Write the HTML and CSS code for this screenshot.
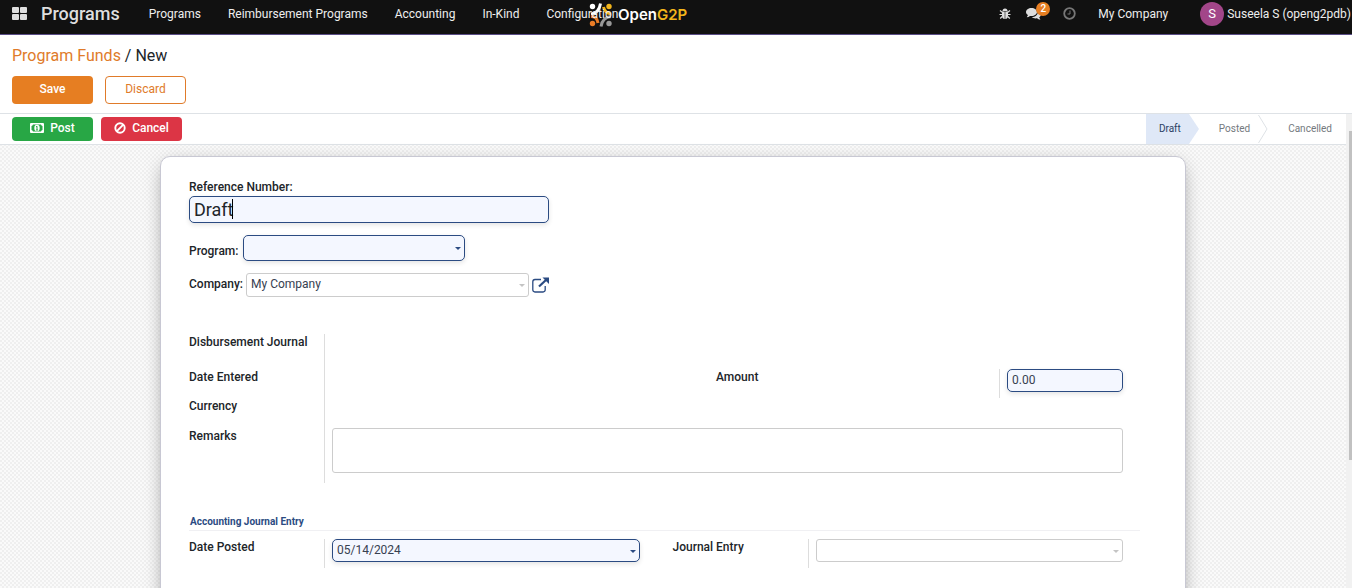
FILE: index.html
```html
<!DOCTYPE html>
<html lang="en">
<head>
<meta charset="utf-8">
<title>Program Funds - New</title>
<link rel="stylesheet" href="styles.css">
</head>
<body>
<header class="navbar">
  <button class="apps" aria-label="Home menu">
    <svg width="15" height="13" viewBox="0 0 15 13" fill="#dedede"><rect width="7" height="6" rx="1"/><rect x="8" width="7" height="6" rx="1"/><rect y="7" width="7" height="6" rx="1"/><rect x="8" y="7" width="7" height="6" rx="1"/></svg>
  </button>
  <a class="brand" href="#">Programs</a>
  <nav class="menu">
    <a href="#">Programs</a>
    <a href="#">Reimbursement Programs</a>
    <a href="#">Accounting</a>
    <a href="#">In-Kind</a>
    <a href="#">Configuration</a>
  </nav>
  <div class="logo">
    <svg width="24" height="24" viewBox="0 0 24 24">
      <g fill="none" stroke-width="3"><path d="M2 11C7 10.500 10.500 7 11.500 .5" stroke="#fff"/><path d="M14.500 4C15.500 8 18 10.500 22 11" stroke="#f3b51b"/><path d="M2 13.500C6 13.500 8.500 16 9 20" stroke="#e97c26"/><path d="M22 13.500C17 14 13 17 12 23.500" stroke="#999"/></g>
      <circle cx="3.500" cy="3.500" r="2.700" fill="#fff"/><circle cx="20" cy="3.500" r="2.700" fill="#f3b51b"/><circle cx="3.500" cy="20.500" r="2.700" fill="#e97c26"/><circle cx="20" cy="20.500" r="2.700" fill="#999"/>
    </svg>
    <span class="logo-text">Open<b>G2P</b></span>
  </div>
  <div class="systray">
    <button class="tray-btn bug" aria-label="Debug">
      <svg width="12" height="12" viewBox="0 0 12 12"><path d="M3.500 3a2.500 2.500 0 0 1 5 0z" fill="#dedede"/><path d="M3 3.500h2.700V11C3.800 11 3 9.500 3 7.500zM6.300 3.500H9v4c0 2-.8 3.500-2.700 3.500z" fill="#dedede"/><path d="M1 2.500l2.500 2M11 2.500l-2.500 2M.5 6.500H3M9 6.500h2.500M1.200 10.500l2-2M10.800 10.500l-2-2" stroke="#dedede" stroke-width="1.200"/></svg>
    </button>
    <button class="tray-btn chat" aria-label="Messages">
      <svg width="15" height="12" viewBox="0 0 15 12" fill="#dedede"><path d="M5.500 0C8.600 0 11 1.800 11 4S8.600 8 5.500 8L4 7.900C3 8.800 1.900 9.300.8 9.300L2 7C.8 6.300 0 5.200 0 4c0-2.200 2.400-4 5.500-4z"/><path d="M12 3.500c1.900.6 3 1.800 3 3.100 0 1.100-.7 2-1.800 2.700l1.200 2.500c-1.400-.1-2.500-.6-3.400-1.500-2.300.3-4.200-.2-5.300-1.200C9.300 9 12 7 12 3.500z"/></svg>
      <span class="badge">2</span>
    </button>
    <button class="tray-btn clock" aria-label="Activities">
      <svg width="13" height="13" viewBox="0 0 13 13" fill="none" stroke="#777"><circle cx="6.500" cy="6.500" r="5.300" stroke-width="1.800"/><path d="M7 3.500V7H4.500"/></svg>
    </button>
    <a class="company" href="#">My Company</a>
    <a class="user" href="#"><span class="avatar">S</span>Suseela S (openg2pdb)</a>
  </div>
</header>

<section class="control-panel">
  <div class="breadcrumb"><a href="#">Program Funds</a> / New</div>
  <div class="actions">
    <button class="btn save">Save</button>
    <button class="btn discard">Discard</button>
  </div>
</section>

<main class="content">
  <div class="form-view">
    <div class="statusbar">
      <button class="btn post"><svg width="14" height="10" viewBox="0 0 14 10"><rect width="14" height="10" rx="1" fill="#fff"/><path d="M3 1.500h8a2 2 0 0 0 1.500 1.500v4A2 2 0 0 0 11 8.500H3A2 2 0 0 0 1.500 7V3A2 2 0 0 0 3 1.500z" fill="#28a745"/><ellipse cx="7" cy="5" rx="2.700" ry="3.200" fill="#fff"/><path d="M6 4l1-.8V7M6 7h2" fill="none" stroke="#28a745"/></svg>Post</button>
      <button class="btn cancel"><svg width="12" height="12" viewBox="0 0 12 12" fill="none" stroke="#fff" stroke-width="1.900"><circle cx="6" cy="6" r="4.700"/><path d="M2.700 9.300l6.600-6.600"/></svg>Cancel</button>
      <div class="stages">
        <button class="stage current">Draft</button>
        <svg class="arrow" width="11" height="30" viewBox="0 0 11 30"><path d="M0 0L10 15 0 30z" fill="#dfe8f7"/></svg>
        <button class="stage">Posted</button>
        <svg class="arrow" width="11" height="30" viewBox="0 0 11 30"><path d="M.5 1L9 15 .5 29" fill="none" stroke="#dee2e6"/></svg>
        <button class="stage last">Cancelled</button>
      </div>
    </div>
    <form class="sheet">
      <label class="label" for="ref">Reference Number:</label>
      <div class="ref-box"><input class="field required ref" id="ref" value="Draft"><span class="caret"></span></div>
      <div class="line program-line">
        <label class="label" for="program">Program:</label>
        <div class="picker"><select class="field required" id="program"><option></option></select></div>
      </div>
      <div class="line company-line">
        <label class="label" for="company">Company:</label>
        <div class="picker muted"><select class="field" id="company"><option>My Company</option></select></div>
        <button type="button" class="external" aria-label="Open company">
          <svg width="17" height="16" viewBox="0 0 17 16" fill="none" stroke="#2b4b82"><path d="M9 2.500H3A2.300 2.300 0 0 0 .8 4.800v8A2.300 2.300 0 0 0 3 15h8a2.300 2.300 0 0 0 2.200-2.200V9" stroke-width="1.300"/><path d="M7 9.500L14 3" stroke-width="2.200"/><path d="M10.500.5H17V7z" fill="#2b4b82" stroke="none"/></svg>
        </button>
      </div>

      <div class="group main-group">
        <div class="labels">
          <span class="label">Disbursement Journal</span>
          <span class="label">Date Entered</span>
          <span class="label">Currency</span>
          <label class="label" for="remarks">Remarks</label>
        </div>
        <div class="values">
          <div class="amount-row">
            <label class="label" for="amount">Amount</label>
            <div class="amount-cell"><input class="field required" id="amount" value="0.00"></div>
          </div>
          <textarea class="field remarks" id="remarks"></textarea>
        </div>
      </div>

      <h2 class="separator">Accounting Journal Entry</h2>
      <div class="group entry-group">
        <label class="label" for="posted">Date Posted</label>
        <div class="cell"><div class="picker"><select class="field required" id="posted"><option>05/14/2024</option></select></div></div>
        <label class="label second" for="journal">Journal Entry</label>
        <div class="cell"><div class="picker muted"><select class="field" id="journal"><option></option></select></div></div>
      </div>
    </form>
  </div>
  <div class="scrollbar"><div class="thumb"></div></div>
</main>
</body>
</html>
```
FILE: styles.css
```css
* { box-sizing: border-box; }

body {
  margin: 0;
  height: 100vh;
  display: flex;
  flex-direction: column;
  overflow: hidden;
  background: #fff;
  color: #212529;
  font: 12px/18px Roboto, "Liberation Sans", sans-serif;
}

a { color: inherit; text-decoration: none; }

button, input, select, textarea { font: inherit; color: inherit; }

button {
  padding: 0;
  border: 0;
  background: none;
}

svg { display: block; flex: none; }

/* Top bar */
.navbar {
  position: relative;
  display: flex;
  align-items: center;
  flex: none;
  height: 35px;
  padding: 0 1px 7px 12px;
  background: #111;
  border-bottom: 1px solid #5a4d86;
  color: #eee;
  white-space: nowrap;
}

.brand {
  margin-left: 14px;
  font-size: 18px;
  font-weight: 500;
  color: #dedede;
}

.menu {
  display: flex;
  gap: 27px;
  margin-left: 29px;
  z-index: 1;
}

.logo {
  position: absolute;
  left: 589px;
  top: 3px;
  display: flex;
  align-items: center;
  gap: 5px;
}

.logo-text {
  font: 600 15px/20px Inter, "Open Sans", sans-serif;
  color: #fff;
}

.logo-text b {
  font-weight: 600;
  color: #f3b51b;
}

.systray {
  display: flex;
  align-items: center;
  margin-left: auto;
}

.chat {
  position: relative;
  margin-left: 15px;
}

.clock { margin-left: 22px; }

.badge {
  position: absolute;
  left: 10px;
  top: -6px;
  width: 14px;
  border-radius: 7px;
  background: #e67e22;
  color: #fff;
  font-size: 10px;
  font-weight: 500;
  line-height: 14px;
}

.company { margin-left: 22px; }

.user {
  display: flex;
  align-items: center;
  gap: 3px;
  margin-left: 32px;
}

.avatar {
  width: 24px;
  border-radius: 50%;
  background: #a24689;
  color: #fff;
  font-size: 13px;
  line-height: 24px;
  text-align: center;
}

/* Breadcrumb and record buttons */
.control-panel {
  flex: none;
  padding: 9px 12px;
  border-bottom: 1px solid #dee2e6;
}

.breadcrumb {
  font-size: 16px;
  line-height: 24px;
}

.breadcrumb a { color: #e07b2a; }

.actions {
  display: flex;
  gap: 12px;
  margin-top: 8px;
}

.btn {
  display: flex;
  align-items: center;
  justify-content: center;
  gap: 6px;
  width: 81px;
  height: 28px;
  border-radius: 4px;
  color: #fff;
}

.save {
  background: #e67e22;
  padding-bottom: 2px;
  font-weight: 500;
}

.discard {
  border: 1px solid #e07b2a;
  padding-bottom: 2px;
  color: #e07b2a;
}

/* Scrolling form area */
.content {
  display: flex;
  flex: 1;
  min-height: 0;
}

.form-view {
  flex: 1;
  min-width: 0;
  overflow: hidden;
  background: repeating-conic-gradient(#efefef 0 25%, #fafafa 0 50%) 0 0 / 4px 4px;
}

.scrollbar {
  flex: none;
  width: 6px;
  padding: 17px 0 0 3px;
  background: #f1f1f1;
}

.thumb {
  height: 72%;
  background: #c1c1c1;
}

.statusbar {
  display: flex;
  align-items: center;
  gap: 8px;
  height: 31px;
  padding-left: 12px;
  background: #fff;
  border-bottom: 1px solid #dee2e6;
}

.statusbar .btn {
  height: 24px;
  padding-bottom: 2px;
  font-weight: 500;
}

.post { background: #28a745; }
.cancel { background: #dc3545; }

.stages {
  display: flex;
  height: 30px;
  margin-left: auto;
}

.stage {
  padding: 0 8px 0 19px;
  font-size: 10px;
  color: #74797e;
}

.current {
  padding: 0 8px 0 13px;
  background: #dfe8f7;
  color: #2b3f63;
}

.last { padding-right: 14px; }

.sheet {
  max-width: 1026px;
  height: 600px;
  margin: 11px auto 0;
  padding: 21px 28px;
  background: #fff;
  border: 1px solid #c8c8d3;
  border-radius: 10px;
  box-shadow: 0 5px 20px -6px #777;
}

.label {
  font-weight: 500;
  color: #212529;
}

.field {
  display: block;
  width: 100%;
  height: 23px;
  margin: 0;
  padding: 0 4px 2px;
  border: 1px solid #ccc;
  border-radius: 3px;
  background: #fff;
  color: #374151;
  outline: 0;
  appearance: none;
}

.required {
  border-color: #2b4b82;
  border-radius: 5px;
  background: #f4f7ff;
  box-shadow: 0 2px 5px #0000001c;
}

.ref-box {
  position: relative;
  width: 360px;
}

.ref {
  height: 27px;
  font-size: 18px;
  padding-bottom: 0;
  color: #212529;
}

.caret {
  position: absolute;
  left: 43px;
  top: 3px;
  width: 1px;
  height: 20px;
  background: #000;
}

.line {
  display: flex;
  align-items: center;
}

.program-line {
  gap: 5px;
  margin-top: 12px;
}

.program-line .label { padding-top: 5px; }
.program-line .picker { width: 222px; }
.program-line .field { height: 26px; }

.company-line {
  gap: 3px;
  margin-top: 12px;
}

.company-line .picker { width: 283px; }
.company-line .field { height: 24px; }
.company-line .label { padding-bottom: 2px; }

.picker { position: relative; }

.picker::after {
  content: "";
  position: absolute;
  right: 4px;
  top: calc(50% - 1px);
  border: 3px solid transparent;
  border-top-color: #2b4b82;
  border-bottom: 0;
}

.muted::after { border-top-color: #c4c4c4; }

/* Field groups */
.main-group {
  display: grid;
  grid-template-columns: 136px 1fr;
  margin: 37px 34px 0 0;
}

.group .label { line-height: 16px; }

.labels {
  display: grid;
  grid-template-rows: 35px 29px 30px auto;
  height: 149px;
  border-right: 1px solid #ddd;
}

.values { padding: 35px 0 0 7px; }

.amount-row {
  display: grid;
  grid-template-columns: 283px 124px;
  justify-content: end;
  height: 29px;
}

.amount-cell, .cell {
  padding-left: 7px;
  border-left: 1px solid #ddd;
}

.remarks {
  height: 45px;
  margin-top: 30px;
  resize: none;
}

.separator {
  margin: 30px 17px 8px 0;
  padding: 0 1px;
  border-bottom: 1px solid #f0f0f3;
  font-size: 10px;
  line-height: 17px;
  font-weight: 700;
  color: #2b4b82;
}

.entry-group {
  display: grid;
  grid-template-columns: 135px 1fr 168px 1fr;
  height: 29px;
  margin-right: 34px;
}

.second { margin-left: 33px; }
```
